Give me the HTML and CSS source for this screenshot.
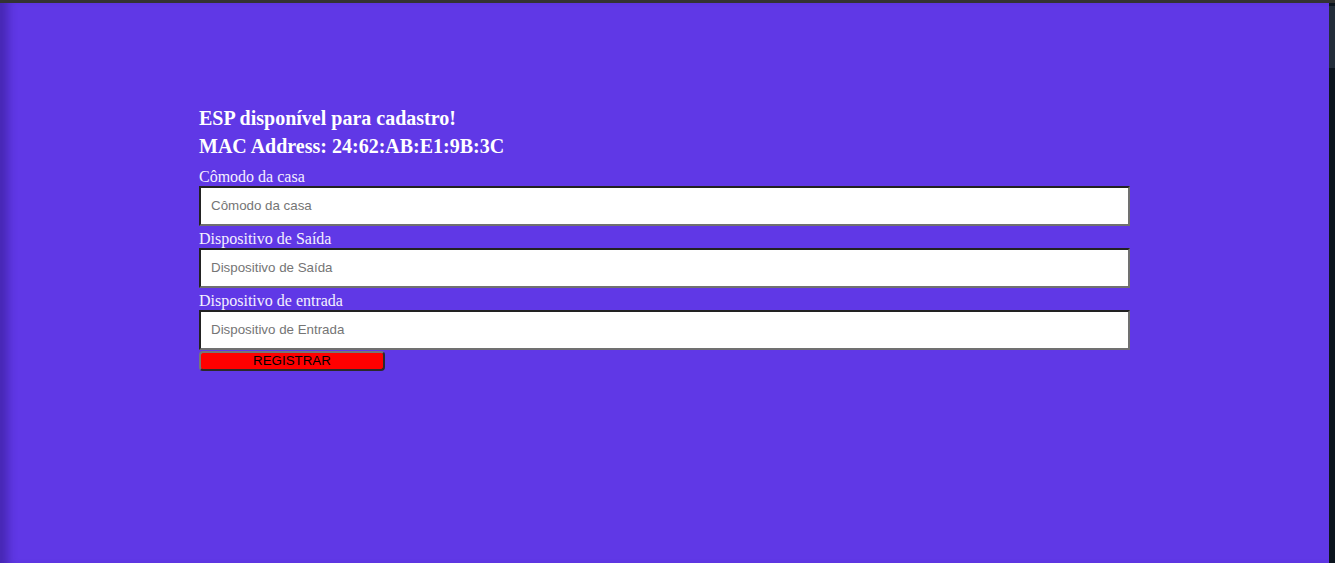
FILE: index.html
```html
<!DOCTYPE html>
<html lang="pt-BR">
<head>
<meta charset="utf-8">
<title>Cadastro ESP</title>
<link rel="stylesheet" href="styles.css">
</head>
<body>
<div class="frame">
  <div class="topbar"></div>
  <div class="main">
    <div class="page">
      <form class="form">
        <h2 class="title">ESP disponível para cadastro!</h2>
        <h2 class="title">MAC Address: 24:62:AB:E1:9B:3C</h2>
        <div class="fields">
          <label class="label" for="comodo">Cômodo da casa</label>
          <input class="input" id="comodo" type="text" placeholder="Cômodo da casa">
          <label class="label" for="saida">Dispositivo de Saída</label>
          <input class="input" id="saida" type="text" placeholder="Dispositivo de Saída">
          <label class="label" for="entrada">Dispositivo de entrada</label>
          <input class="input input-last" id="entrada" type="text" placeholder="Dispositivo de Entrada">
          <button class="btn" type="button">REGISTRAR</button>
        </div>
      </form>
    </div>
    <div class="scrollbar"><div class="thumb"></div></div>
  </div>
</div>
</body>
</html>
```

FILE: styles.css
```css
html, body {
  margin: 0;
  padding: 0;
  background: #0b141e;
}
.frame {
  width: 1335px;
  height: 563px;
  display: flex;
  flex-direction: column;
  overflow: hidden;
}
.topbar {
  height: 3px;
  background: #333333;
  flex: none;
}
.main {
  flex: 1;
  display: flex;
  min-height: 0;
}
.page {
  flex: 1;
  background: #6038e6;
  box-shadow: inset 14px 0 10px -6px rgba(40, 20, 120, 0.45);
  padding: 101px 0 0 199px;
  box-sizing: border-box;
}
.scrollbar {
  width: 6px;
  flex: none;
  background: #0b141e;
  padding-top: 3px;
  box-sizing: border-box;
}
.thumb {
  height: 62px;
  background: #222d3a;
}
.form {
  width: 931px;
  margin: 0;
}
.title {
  margin: 0;
  font-family: "Liberation Serif", "Times New Roman", serif;
  font-weight: bold;
  font-size: 20px;
  line-height: 28px;
  color: #ffffff;
}
.fields {
  display: flex;
  flex-direction: column;
  align-items: flex-start;
  margin-top: 8px;
}
.label {
  font-family: "Liberation Serif", "Times New Roman", serif;
  font-size: 16px;
  line-height: 18px;
  color: #f4f0ff;
}
.input {
  width: 931px;
  height: 40px;
  box-sizing: border-box;
  border-style: solid;
  border-width: 2px;
  border-top-color: #222222;
  border-left-color: #222222;
  border-right-color: #707070;
  border-bottom-color: #707070;
  background: #ffffff;
  padding: 0 10px 1px 10px;
  margin: 0 0 4px 0;
  font-family: "Liberation Sans", Arial, sans-serif;
  font-size: 13.33px;
  color: #222222;
  outline: none;
}
.input::placeholder {
  color: #757575;
}
.input-last {
  margin-bottom: 1px;
}
.btn {
  width: 186px;
  height: 20px;
  box-sizing: border-box;
  background: #ff0000;
  border-style: solid;
  border-width: 2px;
  border-top-color: #767676;
  border-left-color: #767676;
  border-right-color: #2a2a2a;
  border-bottom-color: #2a2a2a;
  border-radius: 4px;
  padding: 0;
  font-family: "Liberation Sans", Arial, sans-serif;
  font-size: 13.33px;
  line-height: 14px;
  color: #000000;
}
```
